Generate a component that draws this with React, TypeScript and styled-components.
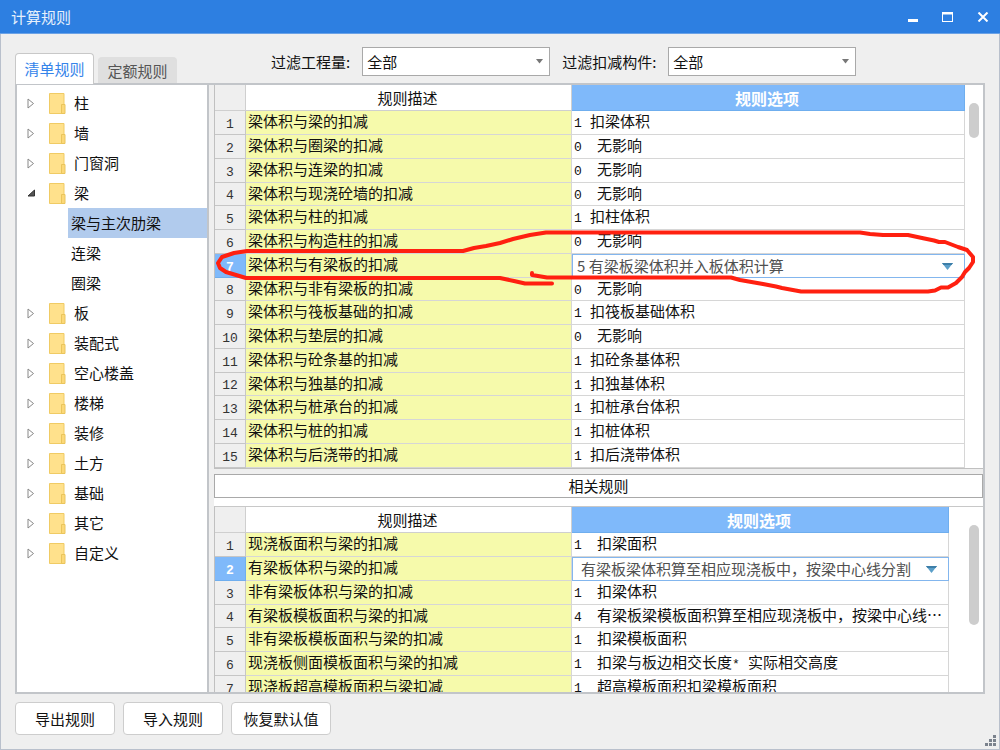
import React, { useState } from 'react';
import styled, { createGlobalStyle } from 'styled-components';

const GlobalStyle = createGlobalStyle`
  *, *::before, *::after { box-sizing: border-box; }
  body {
    margin: 0;
    background: #efefef;
    color: #111;
    font: 15px/20px "Noto Sans CJK SC", sans-serif;
  }
  button, select { font: inherit; color: inherit; margin: 0; padding: 0; }
`;

const Window = styled.div`
  position: relative;
  display: flex;
  flex-direction: column;
  min-height: 100vh;
  border: 1px solid #b9c0cc;
  border-width: 0 1px 1px;
  background: #efefef;
`;

const TitleBar = styled.header`
  display: flex;
  align-items: center;
  justify-content: space-between;
  height: 34px;
  margin: 0 -1px;
  padding-left: 11px;
  background: #2d7fe1;
  border-bottom: 1px solid #6ba2e6;
  color: #e6f0fc;
`;

const Title = styled.h1`
  margin: 0;
  font-size: 15px;
  font-weight: 400;
`;

const WindowButtons = styled.div`
  display: flex;
`;

const WindowButton = styled.button`
  display: flex;
  align-items: center;
  justify-content: center;
  width: 35px;
  height: 33px;
  border: 0;
  background: none;
`;

const Toolbar = styled.div`
  display: flex;
  align-items: flex-end;
  height: 49px;
  padding: 0 14px;
`;

const Tabs = styled.div`
  display: flex;
  align-items: flex-end;
  gap: 4px;
  width: 256px;
  flex: none;
`;

const Tab = styled.button<{ $active?: boolean }>`
  width: 79px;
  height: ${p => (p.$active ? 31 : 26)}px;
  margin-bottom: ${p => (p.$active ? -1 : 0)}px;
  border: 1px solid ${p => (p.$active ? '#c8c8c8' : '#dfdfdf')};
  border-bottom: 0;
  border-radius: 4px 4px 0 0;
  background: ${p => (p.$active ? '#fff' : '#dfdfdf')};
  color: ${p => (p.$active ? '#3584ea' : '#555')};
  z-index: 1;
`;

const Filters = styled.div`
  display: flex;
  align-items: center;
  gap: 12px;
  padding-bottom: 7px;
`;

const Filter = styled.label`
  display: flex;
  align-items: center;
  gap: 12px;
  white-space: nowrap;
`;

const SelectBox = styled.span`
  position: relative;
  display: block;
`;

const FilterSelect = styled.select`
  appearance: none;
  display: block;
  width: 188px;
  height: 29px;
  padding: 0 4px;
  border: 1px solid #a9a9a9;
  border-radius: 0;
  background: #fff;
`;

const Arrow = styled.svg<{ $right: number }>`
  position: absolute;
  top: calc(50% - 3px);
  right: ${p => p.$right}px;
  pointer-events: none;
`;

const Main = styled.main`
  display: flex;
  margin: 0 14px;
  border: 2px solid #c2c5c9;
`;

const Tree = styled.ul`
  flex: none;
  width: 192px;
  margin: 0;
  padding: 3px 0;
  list-style: none;
  background: #fff;
  border-right: 2px solid #c2c5c9;
`;

const Branch = styled.ul`
  margin: 0;
  padding: 0 0 0 51px;
  list-style: none;
`;

const TreeItem = styled.button`
  display: flex;
  align-items: center;
  width: 100%;
  height: 30px;
  padding-left: 10px;
  border: 0;
  background: none;
  text-align: left;
`;

const TreeIcon = styled.svg`
  flex: none;
  width: 9px;
  height: 11px;
`;

const Folder = styled.svg`
  flex: none;
  margin: 0 8px 0 13px;
`;

const Leaf = styled.button<{ $selected?: boolean }>`
  display: block;
  width: 100%;
  height: 30px;
  padding-left: 3px;
  border: 0;
  background: ${p => (p.$selected ? '#b1cbed' : 'none')};
  text-align: left;
`;

const Rules = styled.section`
  flex: 1;
  min-width: 0;
  margin-left: 5px;
`;

const Pane = styled.div<{ $clip?: boolean }>`
  position: relative;
  display: flex;
  background: #fff;
  border-left: 1px solid #c0c0c0;
  border-bottom: ${p => (p.$clip ? 0 : 1)}px solid #c0c0c0;
  border-top: ${p => (p.$clip ? 1 : 0)}px solid #c8c8c8;
  ${p => p.$clip && 'height: 186px; overflow: hidden;'}
`;

const Table = styled.table`
  flex: 1;
  align-self: flex-start;
  min-width: 0;
  table-layout: fixed;
  border-collapse: separate;
  border-spacing: 0;
`;

const NumberCol = styled.col`
  width: 31px;
`;

const DescriptionCol = styled.col`
  width: 326px;
`;

const HeadCell = styled.th<{ $kind: 'corner' | 'plain' | 'active' }>`
  height: 26px;
  padding: 0 2px 0 0;
  line-height: 24px;
  font-size: ${p => (p.$kind === 'active' ? 16 : 15)}px;
  font-weight: ${p => (p.$kind === 'active' ? 700 : 400)};
  color: ${p => (p.$kind === 'active' ? '#fff' : '#111')};
  background: ${p => ({ corner: '#efefef', plain: '#fff', active: '#7fb9fa' })[p.$kind]};
  border: solid ${p => (p.$kind === 'active' ? '#6faeee' : '#cfcfcf')};
  border-width: 0 1px 1px 0;
`;

const Row = styled.tr`
  height: 24px;
  &:nth-child(4n) { height: 23px; }
`;

const NumberCell = styled.th<{ $active?: boolean }>`
  padding: 4px 0 0 0;
  font: ${p => (p.$active ? 700 : 400)} 13px/18px "Liberation Mono", monospace;
  color: ${p => (p.$active ? '#fff' : '#333')};
  background: ${p => (p.$active ? '#7fb9fa' : '#efefef')};
  border: solid ${p => (p.$active ? '#6faeee' : '#c6c6c6')};
  border-width: 0 1px 1px 0;
`;

const Cell = styled.td<{ $tint?: boolean }>`
  padding: 0 5px 0 2px;
  vertical-align: top;
  white-space: nowrap;
  overflow: hidden;
  text-overflow: ellipsis;
  background: ${p => (p.$tint ? '#f6faab' : '#fff')};
  border: solid #d6d6d6;
  border-width: 0 1px 1px 0;
`;

const EditCell = styled.td`
  padding: 0;
`;

const Code = styled.span<{ $wide?: boolean }>`
  display: inline-block;
  width: ${p => (p.$wide ? 23 : 16)}px;
  font-family: "Liberation Mono", monospace;
  font-size: 13px;
  line-height: 14px;
`;

const CellSelect = styled.select<{ $indent: number }>`
  appearance: none;
  display: block;
  width: 100%;
  height: 24px;
  padding: 0 24px 0 ${p => p.$indent}px;
  border: 1px solid #83b6ee;
  border-radius: 0;
  background: #fff;
  color: #505050;
`;

const Track = styled.div<{ $space: number }>`
  flex: none;
  width: 18px;
  margin-left: ${p => p.$space}px;
  padding: 18px 4px 0;
`;

const Thumb = styled.div<{ $size: number }>`
  height: ${p => p.$size}px;
  border-radius: 5px;
  background: #cdcdcd;
`;

const Related = styled.div`
  padding: 5px 0 8px;
  background: linear-gradient(#efefef 5px, #fff 5px);
`;

const RelatedTitle = styled.h2`
  height: 24px;
  margin: 0;
  border: 1px solid #a9a9a9;
  background: #fff;
  font-size: 15px;
  font-weight: 400;
  line-height: 22px;
  text-align: center;
`;

const Mark = styled.svg`
  position: absolute;
  left: -1px;
  top: 140px;
  pointer-events: none;
`;

const Footer = styled.footer`
  display: flex;
  gap: 8px;
  padding: 8px 14px 12px;
`;

const ActionButton = styled.button`
  width: 100px;
  height: 33px;
  border: 1px solid #cdcdcd;
  border-radius: 4px;
  background: #fff;
`;

const Grip = styled.svg`
  position: absolute;
  right: 3px;
  bottom: 3px;
`;

type Rule = { text: string; code: string; value: React.ReactNode; wide?: boolean; edit?: number };

const mainRules: Rule[] = [
  { text: '梁体积与梁的扣减', code: '1', value: '扣梁体积' },
  { text: '梁体积与圈梁的扣减', code: '0', value: '无影响', wide: true },
  { text: '梁体积与连梁的扣减', code: '0', value: '无影响', wide: true },
  { text: '梁体积与现浇砼墙的扣减', code: '0', value: '无影响', wide: true },
  { text: '梁体积与柱的扣减', code: '1', value: '扣柱体积' },
  { text: '梁体积与构造柱的扣减', code: '0', value: '无影响', wide: true },
  { text: '梁体积与有梁板的扣减', code: '', value: '5 有梁板梁体积并入板体积计算', edit: 4 },
  { text: '梁体积与非有梁板的扣减', code: '0', value: '无影响', wide: true },
  { text: '梁体积与筏板基础的扣减', code: '1', value: '扣筏板基础体积' },
  { text: '梁体积与垫层的扣减', code: '0', value: '无影响', wide: true },
  { text: '梁体积与砼条基的扣减', code: '1', value: '扣砼条基体积' },
  { text: '梁体积与独基的扣减', code: '1', value: '扣独基体积' },
  { text: '梁体积与桩承台的扣减', code: '1', value: '扣桩承台体积' },
  { text: '梁体积与桩的扣减', code: '1', value: '扣桩体积' },
  { text: '梁体积与后浇带的扣减', code: '1', value: '扣后浇带体积' },
];

const relatedRules: Rule[] = [
  { text: '现浇板面积与梁的扣减', code: '1', value: '扣梁面积', wide: true },
  { text: '有梁板体积与梁的扣减', code: '', value: '有梁板梁体积算至相应现浇板中，按梁中心线分割', edit: 8 },
  { text: '非有梁板体积与梁的扣减', code: '1', value: '扣梁体积', wide: true },
  { text: '有梁板模板面积与梁的扣减', code: '4', value: '有梁板梁模板面积算至相应现浇板中，按梁中心线⋯', wide: true },
  { text: '非有梁板模板面积与梁的扣减', code: '1', value: '扣梁模板面积', wide: true },
  {
    text: '现浇板侧面模板面积与梁的扣减',
    code: '1',
    value: <>扣梁与板边相交长度<Code>* </Code>实际相交高度</>,
    wide: true,
  },
  { text: '现浇板超高模板面积与梁扣减', code: '1', value: '超高模板面积扣梁模板面积', wide: true },
];

const groups = ['柱', '墙', '门窗洞', '梁', '板', '装配式', '空心楼盖', '楼梯', '装修', '土方', '基础', '其它', '自定义'];
const beamItems = ['梁与主次肋梁', '连梁', '圈梁'];

function RuleTable({ rules, label }: { rules: Rule[]; label: string }) {
  return (
    <Table aria-label={label}>
      <colgroup>
        <NumberCol />
        <DescriptionCol />
        <col />
      </colgroup>
      <thead>
        <tr>
          <HeadCell $kind="corner" />
          <HeadCell $kind="plain" scope="col">规则描述</HeadCell>
          <HeadCell $kind="active" scope="col">规则选项</HeadCell>
        </tr>
      </thead>
      <tbody>
        {rules.map((rule, i) => (
          <Row key={rule.text}>
            <NumberCell scope="row" $active={rule.edit !== undefined}>{i + 1}</NumberCell>
            <Cell $tint>{rule.text}</Cell>
            {rule.edit !== undefined ? (
              <EditCell>
                <SelectBox>
                  <CellSelect $indent={rule.edit} aria-label={rule.text}>
                    <option>{rule.value}</option>
                  </CellSelect>
                  <Arrow $right={12} width="11" height="7" viewBox="0 0 11 7">
                    <path d="M0 0h11L5.500 7z" fill="#5b9fc9" />
                    <path d="M0 0h11L9.500 2h-8z" fill="#3d7ea8" />
                  </Arrow>
                </SelectBox>
              </EditCell>
            ) : (
              <Cell>
                <Code $wide={rule.wide}>{rule.code}</Code>
                {rule.value}
              </Cell>
            )}
          </Row>
        ))}
      </tbody>
    </Table>
  );
}

function FilterField({ label }: { label: string }) {
  return (
    <Filter>
      {label}
      <SelectBox>
        <FilterSelect>
          <option>全部</option>
        </FilterSelect>
        <Arrow $right={7} width="7" height="5" viewBox="0 0 7 5">
          <path d="M0 0h7L3.500 4.500z" fill="#777" />
        </Arrow>
      </SelectBox>
    </Filter>
  );
}

export default function App() {
  const [selected, setSelected] = useState(beamItems[0]);
  return (
    <Window>
      <GlobalStyle />
      <TitleBar>
        <Title>计算规则</Title>
        <WindowButtons>
          <WindowButton aria-label="最小化">
            <svg width="12" height="10"><path d="M1 7h10v3H1z" fill="#fff" /></svg>
          </WindowButton>
          <WindowButton aria-label="最大化">
            <svg width="12" height="10"><path d="M0 0h11v10H0zM1 2.500v6.500h9V2.500z" fill="#fff" fillRule="evenodd" /></svg>
          </WindowButton>
          <WindowButton aria-label="关闭">
            <svg width="12" height="10"><path d="M1.500 .5l9 9m0-9l-9 9" stroke="#fff" strokeWidth="2" /></svg>
          </WindowButton>
        </WindowButtons>
      </TitleBar>

      <Toolbar>
        <Tabs role="tablist">
          <Tab role="tab" aria-selected $active>清单规则</Tab>
          <Tab role="tab" aria-selected={false}>定额规则</Tab>
        </Tabs>
        <Filters>
          <FilterField label="过滤工程量:" />
          <FilterField label="过滤扣减构件:" />
        </Filters>
      </Toolbar>

      <Main>
        <Tree>
          {groups.map(name => {
            const open = name === '梁';
            return (
              <li key={name}>
                <TreeItem aria-expanded={open}>
                  <TreeIcon viewBox="0 0 9 11">
                    {open ? (
                      <path d="M7.500 2v6h-6.500z" fill="#555" stroke="#333" />
                    ) : (
                      <path d="M1 1v9l5.500-4.500z" fill="#fff" stroke="#888" />
                    )}
                  </TreeIcon>
                  <Folder width="17" height="21" viewBox="0 0 17 21">
                    <path d="M.5 .5h14.500v20H.5z" fill="#ffe18c" stroke="#f0cb64" />
                    <path d="M12.500 11.500h3.500v9h-3.500z" fill="#fbd878" stroke="#eac55c" />
                  </Folder>
                  {name}
                </TreeItem>
                {open && (
                  <Branch>
                    {beamItems.map(item => (
                      <li key={item}>
                        <Leaf $selected={item === selected} onClick={() => setSelected(item)}>{item}</Leaf>
                      </li>
                    ))}
                  </Branch>
                )}
              </li>
            );
          })}
        </Tree>

        <Rules>
          <Pane>
            <RuleTable rules={mainRules} label="计算规则" />
            <Track $space={0}><Thumb $size={35} /></Track>
            <Mark width="764" height="72" viewBox="214 225 764 72" aria-hidden="true">
              <path
                d="M552 283.500H525L514 281L500 278H246L236 275L226 272L220 268L218 263L222 257L234 253L247 251H463L474 248L486 246L500 243L513 239L530 235L546 232.500H860L870 234L883 235H908L922 238L934 240.500L939 242H945L958 247L967 250L973 257V262L969 268L965 272L962 277L956 283L948 287.500H941L935 290.500L928 291.500H801L782 288L776 286.500L763 284L740 280L731 277.500H547L532 275V273"
                fill="none"
                stroke="#ff2010"
                strokeWidth="4"
                strokeLinecap="round"
                strokeLinejoin="round"
              />
            </Mark>
          </Pane>
          <Related>
            <RelatedTitle>相关规则</RelatedTitle>
          </Related>
          <Pane $clip>
            <RuleTable rules={relatedRules} label="相关规则" />
            <Track $space={16}><Thumb $size={100} /></Track>
          </Pane>
        </Rules>
      </Main>

      <Footer>
        <ActionButton>导出规则</ActionButton>
        <ActionButton>导入规则</ActionButton>
        <ActionButton>恢复默认值</ActionButton>
      </Footer>
      <Grip width="11" height="11" viewBox="0 0 11 11" aria-hidden="true">
        <path d="M8 0h3v3H8zM4 4h3v3H4zM8 4h3v3H8zM0 8h3v3H0zM4 8h3v3H4zM8 8h3v3H8z" fill="#7b828c" />
      </Grip>
    </Window>
  );
}
